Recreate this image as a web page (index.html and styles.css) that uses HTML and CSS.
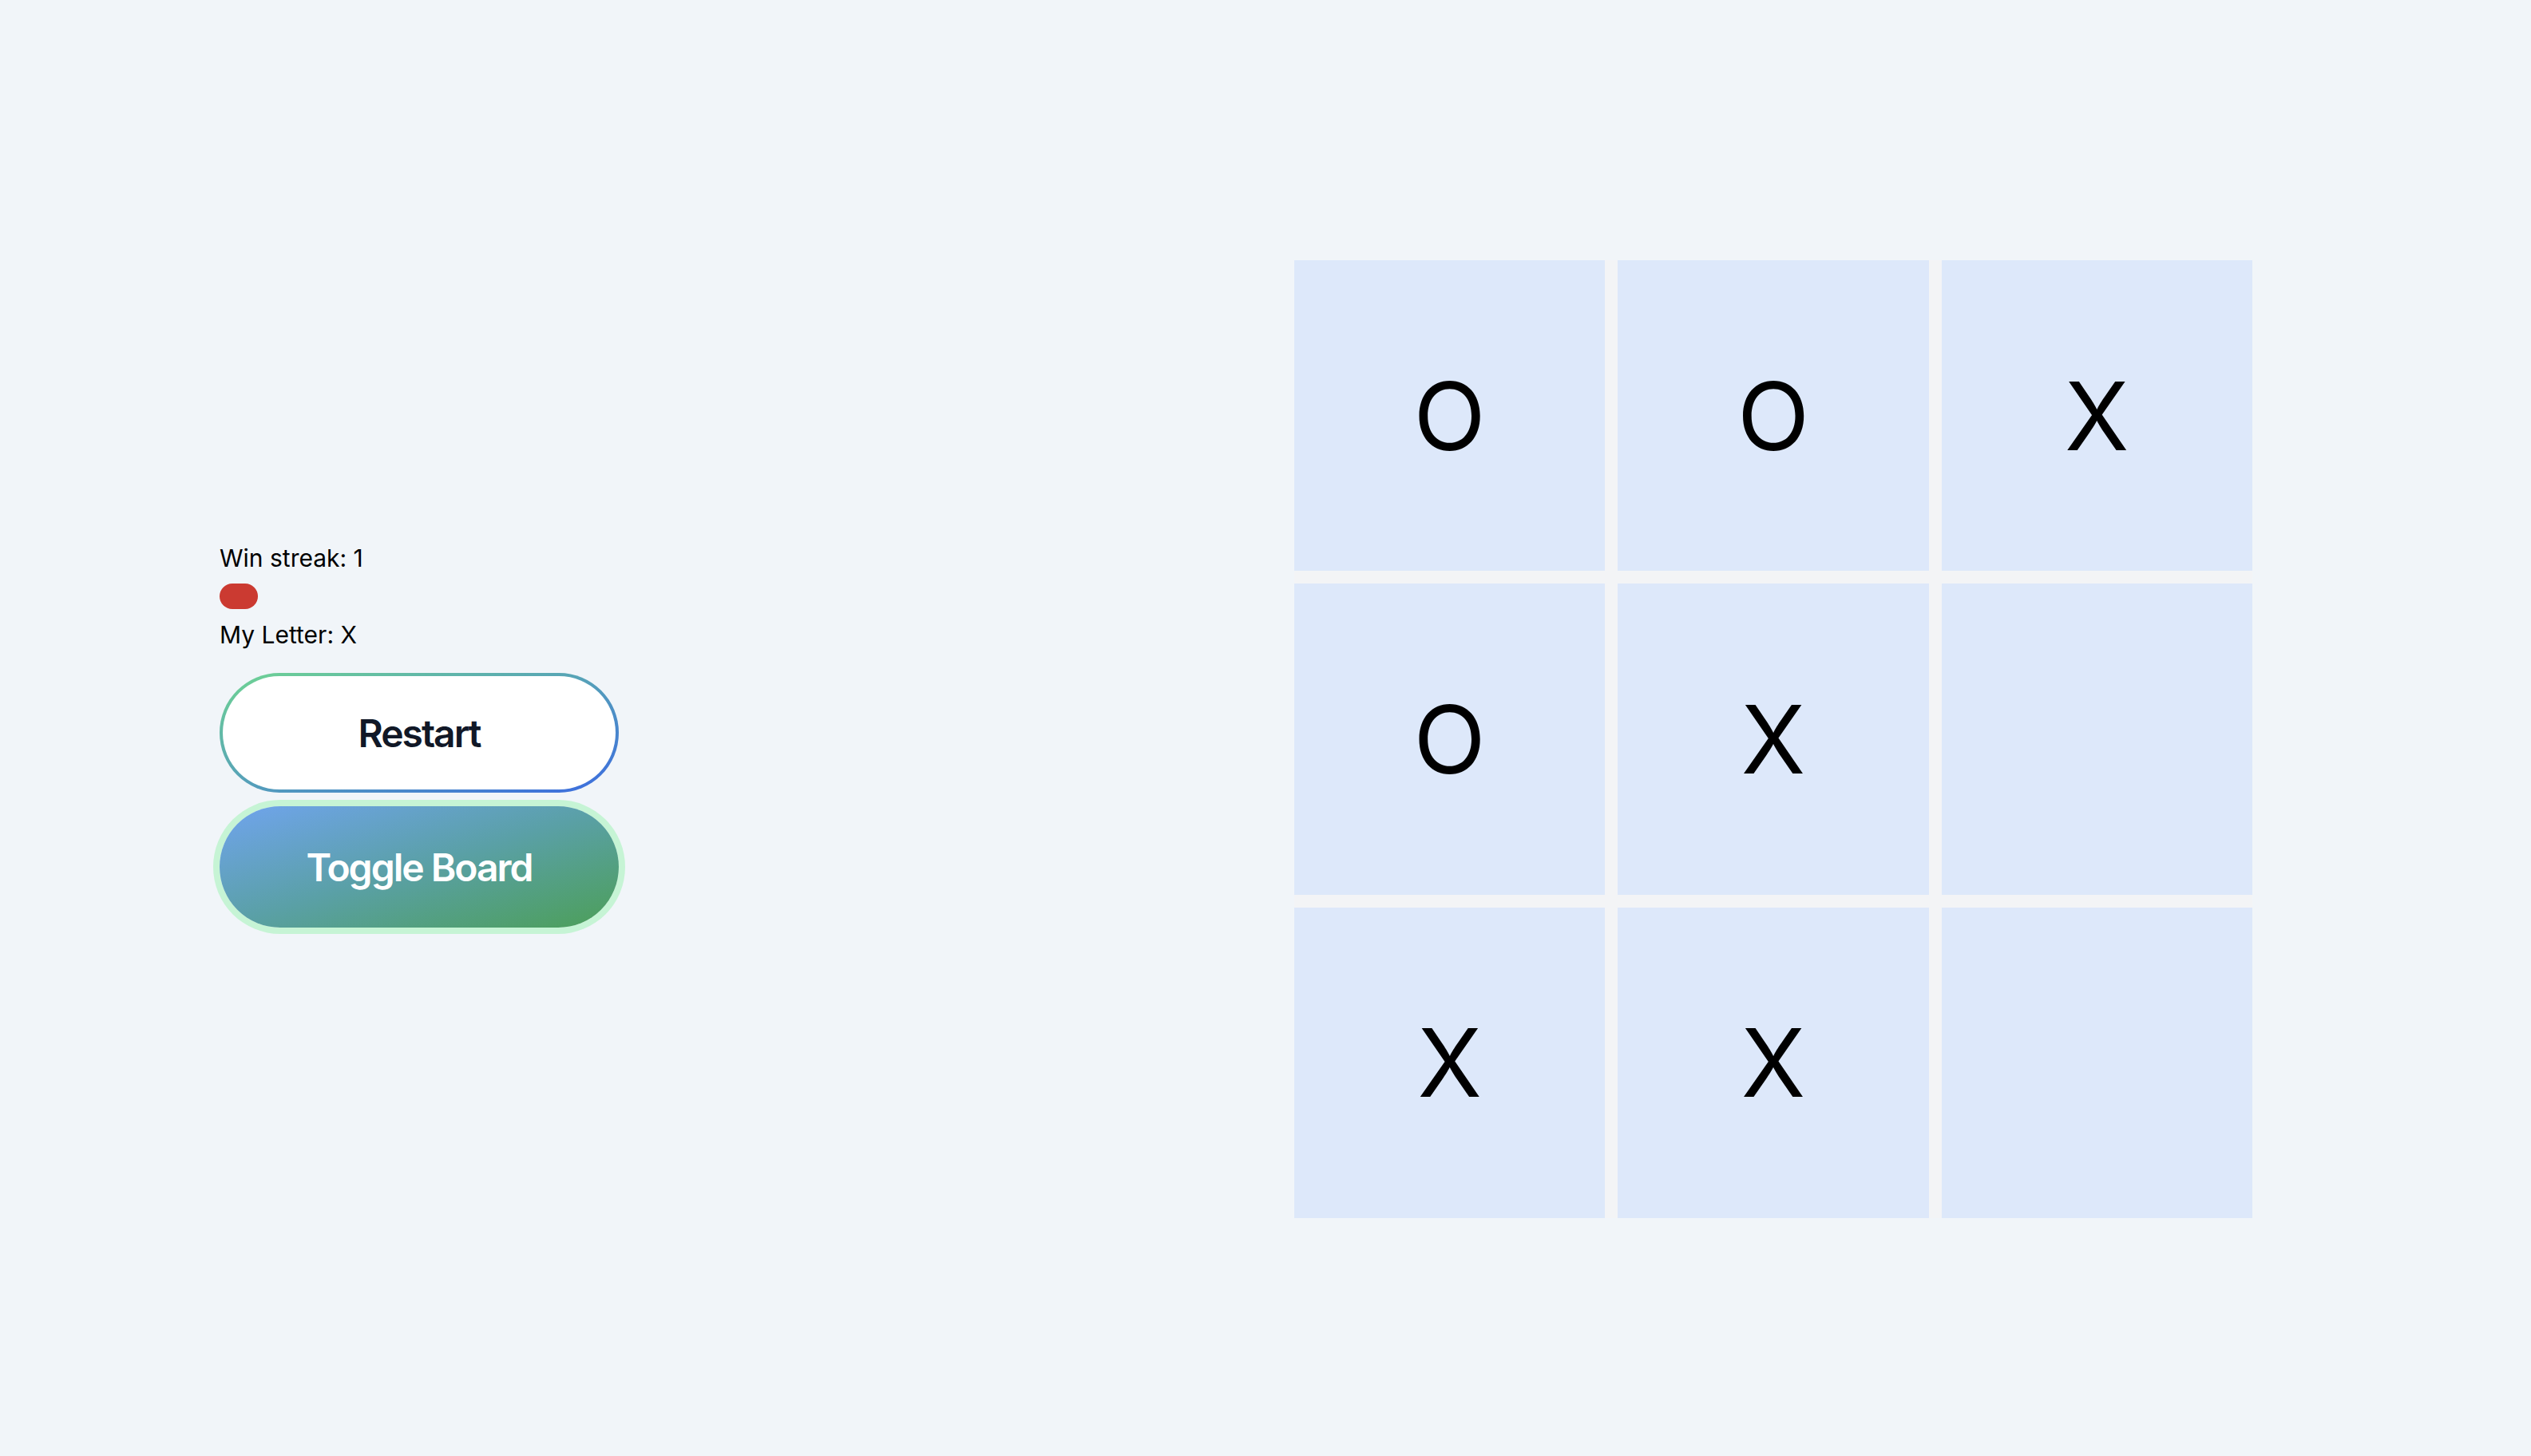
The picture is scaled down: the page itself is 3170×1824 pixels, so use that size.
FILE: index.html
```html
<!DOCTYPE html>
<html lang="en">
<head>
    <meta charset="UTF-8">
    <meta name="viewport" content="width=device-width, initial-scale=1.0">
    <title>Tic Tac Toe</title>
    <link rel="stylesheet" href="styles.css">
</head>
<body>
    <div class="page">
        <div class="sidebar">
            <div class="info">Win streak: 1</div>
            <div class="status-row"><span class="status-pill"></span></div>
            <div class="info">My Letter: X</div>
            <button class="btn btn-restart">Restart</button>
            <button class="btn btn-toggle">Toggle Board</button>
        </div>
        <div class="board">
            <div class="cell">O</div>
            <div class="cell">O</div>
            <div class="cell">X</div>
            <div class="cell">O</div>
            <div class="cell">X</div>
            <div class="cell"></div>
            <div class="cell">X</div>
            <div class="cell">X</div>
            <div class="cell"></div>
        </div>
    </div>
</body>
</html>
```

FILE: styles.css
```css
html, body {
    margin: 0;
    padding: 0;
}
body {
    font-family: Inter, "Noto Sans", sans-serif;
    background-color: #f1f5f9;
    color: #000;
}
.page {
    box-sizing: border-box;
    height: 1824px;
    display: flex;
    align-items: center;
    padding: 28px 349px 0 275px;
}
.sidebar {
    width: 500px;
    flex-shrink: 0;
    display: flex;
    flex-direction: column;
    padding-bottom: 15px;
}
.info {
    font-size: 30px;
    line-height: 48px;
}
.status-row {
    height: 48px;
    display: flex;
    align-items: center;
}
.status-pill {
    width: 48px;
    height: 32px;
    border-radius: 16px;
    background-color: #cb3a31;
}
.btn {
    box-sizing: border-box;
    width: 500px;
    height: 150px;
    border-radius: 76px;
    font-family: Inter, "Noto Sans", sans-serif;
    font-size: 48px;
    font-weight: 600;
    letter-spacing: -2px;
    cursor: pointer;
}
.btn-restart {
    margin-top: 24px;
    color: #111827;
    border: 4px solid transparent;
    background: linear-gradient(#fff, #fff) padding-box,
                linear-gradient(to bottom right, #6fd493, #3b6be0) border-box;
}
.btn-toggle {
    margin-top: 17px;
    height: 152px;
    color: #fff;
    border: none;
    background: linear-gradient(to bottom right, #70a4ee, #5aa0a6 50%, #4c9f58);
    box-shadow: 0 0 0 8px #c6f4d5;
}
.board {
    margin-left: auto;
    width: 1200px;
    height: 1200px;
    flex-shrink: 0;
    display: grid;
    grid-template-columns: repeat(3, 1fr);
    grid-template-rows: repeat(3, 1fr);
    gap: 16px;
    background-color: #f3f4f6;
}
.cell {
    background-color: #dde8fa;
    display: flex;
    align-items: center;
    justify-content: center;
    font-size: 118px;
    font-weight: 400;
}
```
